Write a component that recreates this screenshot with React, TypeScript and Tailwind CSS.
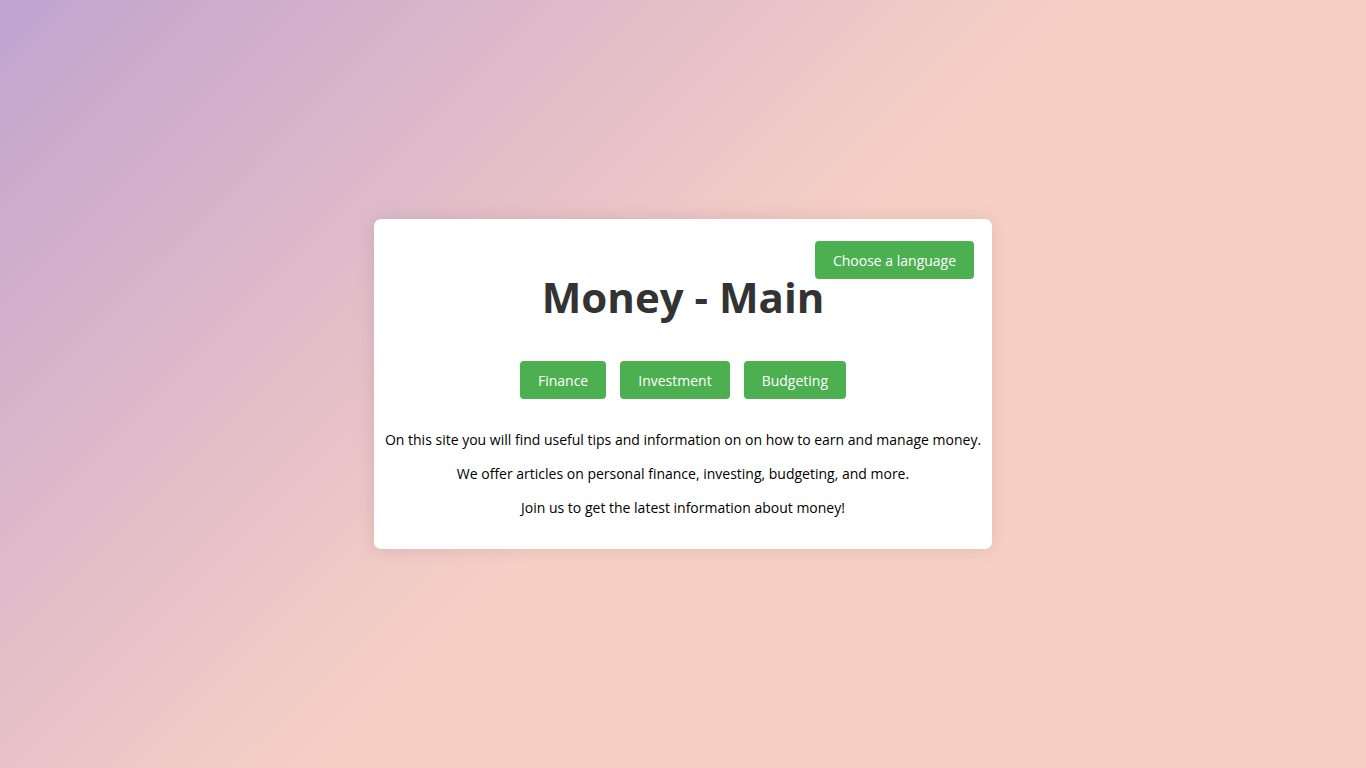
type Topic = { label: string };

const topics: Topic[] = [{ label: "Finance" }, { label: "Investment" }, { label: "Budgeting" }];

const paragraphs = [
  "On this site you will find useful tips and information on on how to earn and manage money.",
  "We offer articles on personal finance, investing, budgeting, and more.",
  "Join us to get the latest information about money!",
];

const buttonStyle =
  "rounded bg-[#4caf50] px-[18px] pt-[10px] pb-2 text-sm leading-5 text-white hover:bg-[#45a049] cursor-pointer";

export default function App() {
  return (
    <main className="flex min-h-screen items-center justify-center bg-[linear-gradient(135deg,#bfa5d2_0%,#c8a8cd_6%,#f8cfc5_51%,#f7cfc5_100%)] font-['Open_Sans','Noto_Sans',sans-serif]">
      <section className="relative rounded-[7px] bg-white px-[11px] pt-[51px] pb-8 text-center shadow-[0_0_18px_rgba(0,0,0,0.1)]">
        <button type="button" className={`${buttonStyle} absolute top-[22px] right-[18px]`}>
          Choose a language
        </button>
        <h1 className="text-[42px] leading-[54px] font-bold text-[#333]">Money - Main</h1>
        <nav className="mt-[37px] flex justify-center gap-[14px]">
          {topics.map((topic) => (
            <button key={topic.label} type="button" className={buttonStyle}>
              {topic.label}
            </button>
          ))}
        </nav>
        <div className="mt-[31px] flex flex-col gap-[15px] text-sm leading-[19px] text-black">
          {paragraphs.map((text) => (
            <p key={text}>{text}</p>
          ))}
        </div>
      </section>
    </main>
  );
}
